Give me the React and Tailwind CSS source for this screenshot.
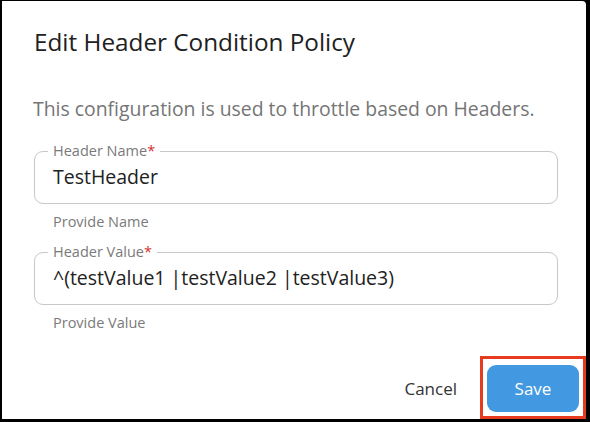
import React from "react";

const Field = ({ label, value, helper, className = "" }) => (
  <div className={className}>
    <fieldset className="border border-[#c8c8c8] rounded-[9px] pl-[18px] pr-4">
      <legend className="ml-[-5px] px-[5px] text-[14.5px] leading-5 text-[#7a7a7a]">
        {label}
        <span className="text-[#d32f2f]">*</span>
      </legend>
      <div className="pt-[2px] pb-[12px] text-[19.5px] leading-[28px] text-[#212121]">
        {value}
      </div>
    </fieldset>
    <p className="mt-2 pl-[19px] text-[14.5px] leading-5 text-[#7a7a7a]">{helper}</p>
  </div>
);

export default function App() {
  return (
    <div
      className="w-[590px] h-[422px] bg-black pl-[2px] pt-[1px] pr-[4px] pb-[3px]"
      style={{ fontFamily: '"Open Sans", "Noto Sans", sans-serif' }}
    >
      <div className="h-full bg-white rounded-tr-[4px] flex flex-col">
        {/* Title */}
        <h2 className="pl-[32px] pt-[26px] text-[24.3px] leading-[30px] text-[#212121]">
          Edit Header Condition Policy
        </h2>

        {/* Description */}
        <p className="pl-[31px] mt-[40px] text-[19.4px] leading-6 text-[#757575]">
          This configuration is used to throttle based on Headers.
        </p>

        <div className="pl-[32px] pr-[28px] mt-[20px]">
          <Field label="Header Name" value="TestHeader" helper="Provide Name" />
          <Field
            className="mt-[10px]"
            label="Header Value"
            value="^(testValue1 |testValue2 |testValue3)"
            helper="Provide Value"
          />
        </div>

        {/* Footer */}
        <div className="mt-auto flex items-center justify-end gap-[30px] pr-[7px] pb-[7px]">
          <button className="text-[17px] text-[#333333] leading-6">Cancel</button>
          <div className="relative">
            <button className="w-[92px] h-[47px] rounded-[9px] bg-[#4299e1] text-white text-[17px]">
              Save
            </button>
            <div className="absolute left-[-7px] top-[-9px] right-[-7px] bottom-[-7px] border-[3px] border-[#e63b1f] pointer-events-none" />
          </div>
        </div>
      </div>
    </div>
  );
}
